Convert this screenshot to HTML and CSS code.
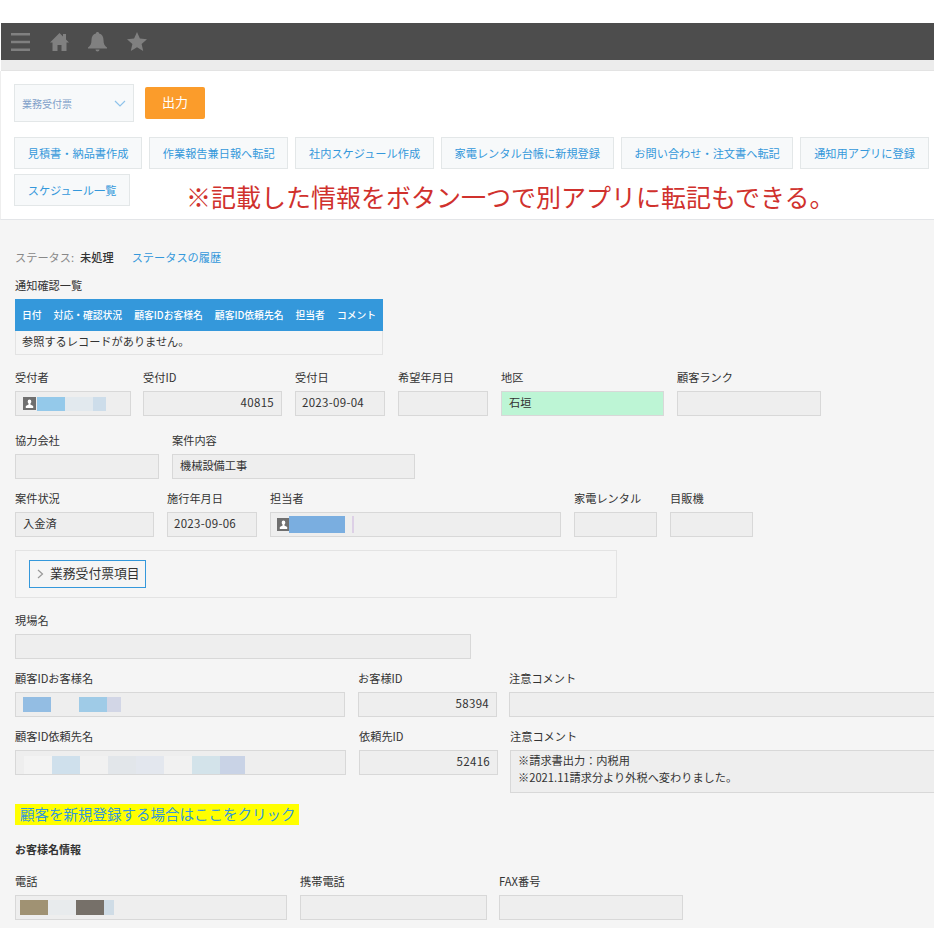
FILE: index.html
```html
<!DOCTYPE html>
<html lang="ja">

<head>
    <meta charset="utf-8">
    <title>業務受付票</title>
    <link rel="stylesheet" href="styles.css">
</head>

<body>
    <div class="app-bar">
        <svg class="bar-icon" width="19" height="20" viewBox="0 0 19 20"><path d="M0 1h19v2.500H0zM0 8.800h19v2.500H0zM0 16.500h19V19H0z"/></svg>
        <svg class="bar-icon" width="19" height="20" viewBox="0 0 19 20"><path d="M9.500 1 0 10.500h2.500V19h5v-6h4v6h5v-8.500H19l-3-3V2h-3v2.500z"/></svg>
        <svg class="bar-icon" width="19" height="20" viewBox="0 0 19 20"><path d="M9.500 0c1 0 1.600.7 1.600 1.600C14 2.300 15.500 5 15.500 8c0 4 1.300 6 3.500 7.500v1H0v-1C2.200 14 3.500 12 3.500 8c0-3 1.500-5.700 4.400-6.400C7.900.7 8.500 0 9.500 0zM7.500 17.500h4c0 1.200-.9 2-2 2s-2-.8-2-2z"/></svg>
        <svg class="bar-icon" width="20" height="20" viewBox="0 0 20 20"><path d="m10 0 2.900 6.600 7.100.7-5.400 4.700 1.600 7L10 15.300 3.800 19l1.600-7L0 7.300l7.100-.7z"/></svg>
    </div>
    <div class="bar-gap"></div>

    <div class="toolbar">
        <div class="print-row">
            <div class="select-box">
                <span>業務受付票</span>
                <svg width="12" height="7" viewBox="0 0 12 7"><path d="M1 1l5 5 5-5" fill="none" stroke="#8fc3ea" stroke-width="1.200"/></svg>
            </div>
            <button class="print-button">出力</button>
        </div>
        <div class="action-row">
            <a class="action-button">見積書・納品書作成</a>
            <a class="action-button">作業報告兼日報へ転記</a>
            <a class="action-button">社内スケジュール作成</a>
            <a class="action-button">家電レンタル台帳に新規登録</a>
            <a class="action-button">お問い合わせ・注文書へ転記</a>
            <a class="action-button">通知用アプリに登録</a>
        </div>
        <div class="action-row action-row--second">
            <a class="action-button">スケジュール一覧</a>
            <p class="notice">※記載した情報をボタン一つで別アプリに転記もできる。</p>
        </div>
    </div>

    <div class="record">
        <div class="status-line">
            <span class="status-label">ステータス:</span>
            <b class="status-value">未処理</b>
            <a class="status-link">ステータスの履歴</a>
        </div>

        <div class="field-label">通知確認一覧</div>
        <div class="notify-table">
            <div class="notify-head">
                <span>日付</span>
                <span>対応・確認状況</span>
                <span>顧客IDお客様名</span>
                <span>顧客ID依頼先名</span>
                <span>担当者</span>
                <span>コメント</span>
            </div>
            <div class="notify-empty">参照するレコードがありません。</div>
        </div>

        <div class="row row--first">
            <div class="field w116">
                <div class="field-label">受付者</div>
                <div class="input input--user">
                    <svg class="user-icon" width="13" height="13" viewBox="0 0 13 13"><path fill="#6f6f6f" d="M0 0h13v13H0z"/><path fill="#fff" d="M6.500 2.500a1.800 1.800 0 0 1 1.800 1.900c0 1-.5 1.800-.9 2.200v1l2.800 1.300v2H2.800v-2l2.800-1.300v-1c-.4-.4-.9-1.200-.9-2.200a1.800 1.800 0 0 1 1.800-1.900z"/></svg>
                    <span class="blur" style="width:28px;background:#94c9ea"></span>
                    <span class="blur" style="width:28px;background:#e2e9ee"></span>
                    <span class="blur" style="width:13px;background:#cdddea"></span>
                </div>
            </div>
            <div class="field w139 field--tight">
                <div class="field-label">受付ID</div>
                <div class="input input--number">40815</div>
            </div>
            <div class="field w90">
                <div class="field-label">受付日</div>
                <div class="input input--date">2023-09-04</div>
            </div>
            <div class="field w90">
                <div class="field-label">希望年月日</div>
                <div class="input"></div>
            </div>
            <div class="field w163">
                <div class="field-label">地区</div>
                <div class="input input--green">石垣</div>
            </div>
            <div class="field w144">
                <div class="field-label">顧客ランク</div>
                <div class="input"></div>
            </div>
        </div>

        <div class="row row--second">
            <div class="field w144">
                <div class="field-label">協力会社</div>
                <div class="input"></div>
            </div>
            <div class="field w243">
                <div class="field-label">案件内容</div>
                <div class="input">機械設備工事</div>
            </div>
        </div>

        <div class="row row--third">
            <div class="field w139">
                <div class="field-label">案件状況</div>
                <div class="input">入金済</div>
            </div>
            <div class="field w90">
                <div class="field-label">施行年月日</div>
                <div class="input input--date">2023-09-06</div>
            </div>
            <div class="field w291">
                <div class="field-label">担当者</div>
                <div class="input input--staff">
                    <svg class="user-icon" width="13" height="13" viewBox="0 0 13 13"><path fill="#6f6f6f" d="M0 0h13v13H0z"/><path fill="#fff" d="M6.500 2.500a1.800 1.800 0 0 1 1.800 1.900c0 1-.5 1.800-.9 2.200v1l2.800 1.300v2H2.800v-2l2.800-1.300v-1c-.4-.4-.9-1.200-.9-2.200a1.800 1.800 0 0 1 1.800-1.900z"/></svg>
                    <span class="blur blur--tall" style="width:56px;background:#7aaee0"></span>
                    <span class="blur blur--tall blur--gap" style="width:2px;background:#ddd0e6"></span>
                </div>
            </div>
            <div class="field w83">
                <div class="field-label">家電レンタル</div>
                <div class="input"></div>
            </div>
            <div class="field w83">
                <div class="field-label">目販機</div>
                <div class="input"></div>
            </div>
        </div>

        <div class="group-box">
            <div class="group-toggle">
                <svg width="7" height="10" viewBox="0 0 7 10"><path d="M1 1l4.500 4L1 9" fill="none" stroke="#999" stroke-width="1.200"/></svg>
                <span>業務受付票項目</span>
            </div>
        </div>

        <div class="row row--site">
            <div class="field w456">
                <div class="field-label">現場名</div>
                <div class="input"></div>
            </div>
        </div>

        <div class="row row--customer">
            <div class="field w330">
                <div class="field-label">顧客IDお客様名</div>
                <div class="input input--blurred">
                    <span class="blur blur--mid" style="width:28px;background:#93bde3"></span>
                    <span class="blur blur--mid" style="width:28px;background:#eeeeee"></span>
                    <span class="blur blur--mid" style="width:28px;background:#9fcbe7"></span>
                    <span class="blur blur--mid" style="width:14px;background:#d2d6e6"></span>
                </div>
            </div>
            <div class="field w139">
                <div class="field-label">お客様ID</div>
                <div class="input input--number">58394</div>
            </div>
            <div class="field w430 field--tight">
                <div class="field-label">注意コメント</div>
                <div class="input"></div>
            </div>
        </div>

        <div class="row row--client">
            <div class="field w331">
                <div class="field-label">顧客ID依頼先名</div>
                <div class="input input--blurred-low">
                    <span class="blur blur--low" style="width:28px;background:#f3f3f3"></span>
                    <span class="blur blur--low" style="width:28px;background:#cfe0ec"></span>
                    <span class="blur blur--low" style="width:28px;background:#f1f1f1"></span>
                    <span class="blur blur--low" style="width:28px;background:#e2e6ea"></span>
                    <span class="blur blur--low" style="width:28px;background:#e3e7ee"></span>
                    <span class="blur blur--low" style="width:28px;background:#f1f1f1"></span>
                    <span class="blur blur--low" style="width:28px;background:#d3e3ea"></span>
                    <span class="blur blur--low" style="width:25px;background:#c9d3e6"></span>
                </div>
            </div>
            <div class="field w139">
                <div class="field-label">依頼先ID</div>
                <div class="input input--number">52416</div>
            </div>
            <div class="field w430 field--tight">
                <div class="field-label">注意コメント</div>
                <div class="input input--multi">※請求書出力：内税用<br>※2021.11請求分より外税へ変わりました。</div>
            </div>
        </div>

        <a class="register-link">顧客を新規登録する場合はここをクリック</a>

        <h3 class="section-title">お客様名情報</h3>

        <div class="row row--phone">
            <div class="field w272">
                <div class="field-label">電話</div>
                <div class="input input--phone">
                    <span class="blur blur--mid" style="width:28px;background:#a09273"></span>
                    <span class="blur blur--mid" style="width:28px;background:#e8ebed"></span>
                    <span class="blur blur--mid" style="width:28px;background:#767069"></span>
                    <span class="blur blur--mid" style="width:10px;background:#cfdce6"></span>
                </div>
            </div>
            <div class="field w187">
                <div class="field-label">携帯電話</div>
                <div class="input"></div>
            </div>
            <div class="field w184 field--tight">
                <div class="field-label">FAX番号</div>
                <div class="input"></div>
            </div>
        </div>
    </div>
</body>

</html>
```

FILE: styles.css
```css
html {
    overflow: hidden;
    background-color: #fff;
}

body {
    margin: 0;
    padding-top: 23px;
    font-family: "Noto Sans CJK JP", "Noto Sans", sans-serif;
    font-size: 11.200px;
    color: #333;
}

.app-bar {
    display: flex;
    align-items: center;
    gap: 19.500px;
    height: 37px;
    margin-left: 1px;
    padding-left: 10px;
    background-color: #4d4d4d;
}

.bar-icon {
    fill: #808080;
}

.bar-gap {
    height: 10px;
    margin-left: 1px;
    background-color: #ececec;
    border-bottom: 1px solid #e3e3e3;
}

.toolbar {
    height: 149px;
    padding: 13px 0 0 13px;
    box-sizing: border-box;
    background-color: #fff;
    border-bottom: 1px solid #e3e5e8;
    border-left: 1px solid #eee;
}

.print-row {
    display: flex;
    align-items: center;
    gap: 11px;
}

.select-box {
    display: flex;
    align-items: center;
    justify-content: space-between;
    width: 120px;
    height: 38px;
    padding: 0 7px;
    box-sizing: border-box;
    background-color: #f7f9fa;
    border: 1px solid #e3e7e8;
    font-size: 10px;
    color: #7f9fc9;
}

.print-button {
    width: 60px;
    height: 32px;
    padding: 0 0 3px;
    border: 0;
    border-radius: 2px;
    background-color: #fb9c2b;
    color: #fff;
    font-family: inherit;
    font-size: 13px;
}

.action-row {
    display: flex;
    gap: 7px;
    margin-top: 15px;
    white-space: nowrap;
}

.action-row--second {
    margin-top: 5px;
}

.action-button {
    display: block;
    height: 32px;
    line-height: 30px;
    padding: 0 12.700px;
    box-sizing: border-box;
    background-color: #f7f9fa;
    border: 1px solid #e3e7e8;
    font-size: 11.200px;
    color: #3498db;
}

.notice {
    margin: 0 0 0 49px;
    font-size: 25px;
    line-height: 44px;
    height: 32px;
    color: #d0312d;
}

.record {
    height: 708px;
    padding: 27px 0 0 15px;
    box-sizing: border-box;
    background-color: #f5f5f5;
}

.status-line {
    display: flex;
    align-items: center;
    height: 20px;
    margin-bottom: 9px;
}

.status-label {
    color: #888;
    margin-right: 6px;
}

.status-value {
    font-weight: 500;
    color: #333;
}

.status-link {
    margin-left: 18px;
    color: #3498db;
}

.field-label {
    height: 23px;
    line-height: 18px;
    font-size: 11.200px;
    white-space: nowrap;
}

.notify-table {
    width: 368px;
}

.notify-head {
    display: flex;
    gap: 12px;
    align-items: center;
    height: 32px;
    padding-left: 7px;
    background-color: #3498db;
    color: #fff;
    font-size: 9.800px;
    font-weight: 500;
    white-space: nowrap;
}

.notify-empty {
    height: 24px;
    padding-left: 6px;
    line-height: 20px;
    box-sizing: border-box;
    border: 1px solid #e3e3e3;
    border-top: 0;
}

.row {
    display: flex;
    gap: 13px;
}

.field {
    flex: none;
}

.field--tight {
    margin-left: -1px;
}

.row--first {
    margin-top: 13px;
}

.row--second {
    margin-top: 15px;
}

.row--third {
    margin-top: 10px;
}

.row--site {
    margin-top: 13px;
}

.row--customer {
    margin-top: 10px;
}

.row--client {
    margin-top: 10px;
}

.row--phone {
    margin-top: 12px;
}

.input {
    display: flex;
    align-items: center;
    height: 25px;
    padding: 0 7px 3px;
    box-sizing: border-box;
    background-color: #eee;
    border: 1px solid #d8d8d8;
    white-space: nowrap;
    overflow: hidden;
}

.input--number {
    justify-content: flex-end;
    font-size: 11.500px;
    letter-spacing: .3px;
}

.input--date {
    padding-left: 6px;
    font-size: 11.500px;
    letter-spacing: .3px;
}

.input--green {
    background-color: #bdf5d5;
}

.input--multi {
    display: block;
    height: 43px;
    padding-top: 1px;
    line-height: 17px;
}

.input--user,
.input--staff,
.input--blurred,
.input--phone {
    padding-bottom: 0;
}

.input--user .user-icon {
    margin-right: 1px;
}

.input--staff {
    padding-left: 6px;
}

.input--staff .user-icon {
    margin-right: -1px;
}

.input--blurred-low {
    align-items: flex-end;
    padding: 0 7px 0 8px;
}

.input--phone {
    padding-left: 4px;
}

.user-icon {
    flex: none;
}

.blur {
    display: block;
    flex: none;
    height: 14px;
}

.blur--tall {
    height: 17px;
}

.blur--mid {
    height: 15px;
}

.blur--low {
    height: 18px;
}

.blur--gap {
    margin-left: 7px;
}

.group-box {
    display: flex;
    align-items: center;
    width: 602px;
    height: 48px;
    margin-top: 13px;
    padding-left: 13px;
    box-sizing: border-box;
    border: 1px solid #e3e3e3;
}

.group-toggle {
    display: flex;
    align-items: center;
    gap: 6px;
    width: 117px;
    height: 28px;
    padding-left: 7px;
    box-sizing: border-box;
    border: 1px solid #3498db;
    font-size: 12.800px;
    white-space: nowrap;
}

.group-toggle span {
    padding-bottom: 3px;
}

.register-link {
    display: block;
    width: 284px;
    height: 21px;
    margin-top: 11px;
    padding-left: 5px;
    box-sizing: border-box;
    background-color: #ff0;
    line-height: 19px;
    font-size: 14.500px;
    color: #3498db;
    white-space: nowrap;
}

.section-title {
    margin: 15px 0 0;
    height: 20px;
    line-height: 18px;
    font-size: 11px;
    font-weight: 700;
}

.w83 { width: 83px; }
.w90 { width: 90px; }
.w116 { width: 116px; }
.w139 { width: 139px; }
.w144 { width: 144px; }
.w163 { width: 163px; }
.w184 { width: 184px; }
.w187 { width: 187px; }
.w243 { width: 243px; }
.w272 { width: 272px; }
.w291 { width: 291px; }
.w330 { width: 330px; }
.w331 { width: 331px; }
.w430 { width: 430px; }
.w456 { width: 456px; }
```
